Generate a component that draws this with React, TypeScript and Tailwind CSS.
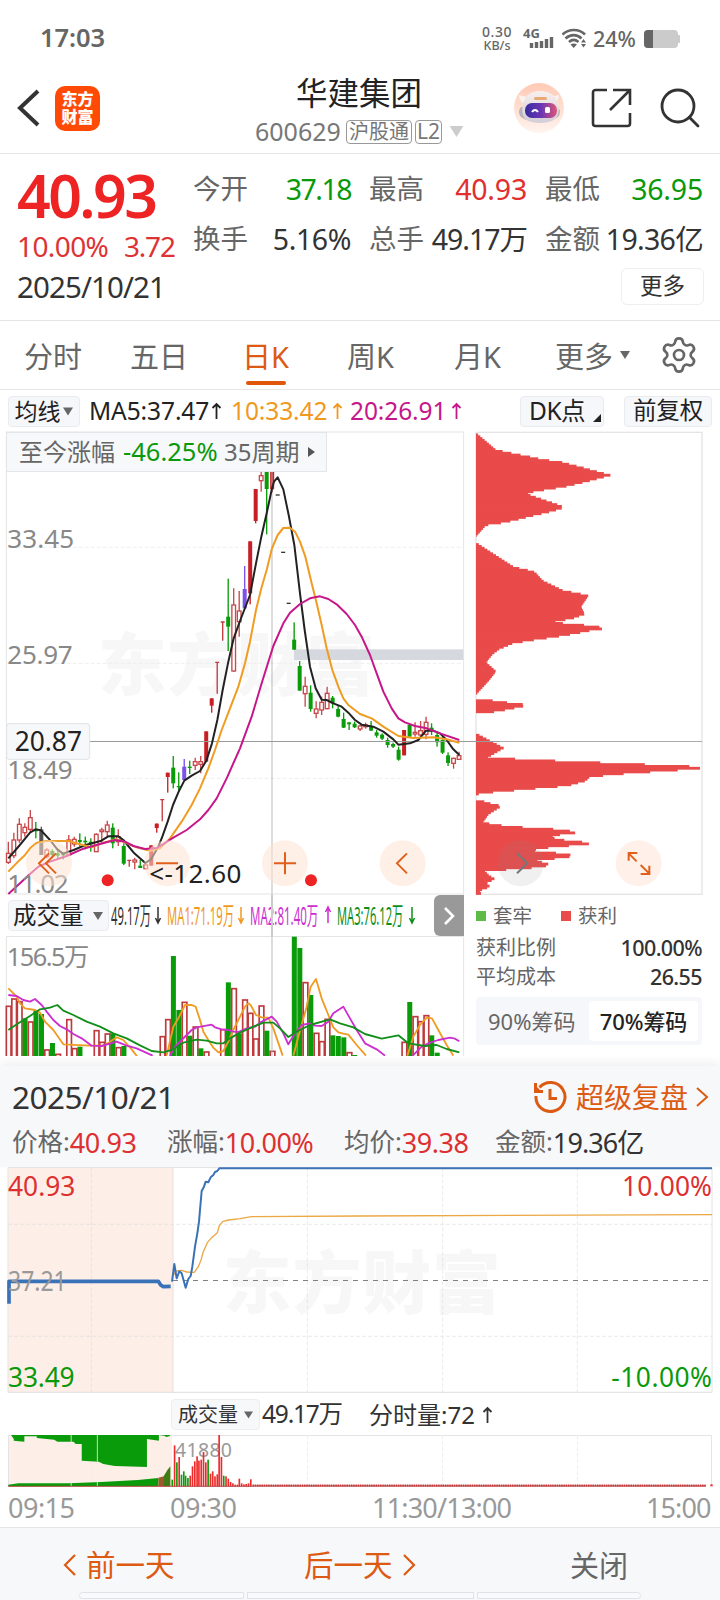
import { Search, Settings } from "lucide-react";
import clsx from "clsx";

type Candle = [kind: string, open: number, close: number, high: number, low: number];
type Point = [number, number];

// r = hollow red, R = solid red, g = green, k = grey, p = purple, t = limit up, d = dash
const candles: Candle[] = [
  ["r", 1390, 1417, 1355, 1422], ["r", 1350, 1397, 1328, 1405], ["r", 1303, 1350, 1285, 1358],
  ["r", 1312, 1328, 1300, 1340], ["r", 1283, 1318, 1260, 1325], ["g", 1318, 1324, 1296, 1345],
  ["k", 1318, 1395, 1310, 1395], ["r", 1380, 1400, 1375, 1405], ["g", 1383, 1395, 1378, 1405],
  ["g", 1390, 1397, 1380, 1405], ["g", 1392, 1396, 1388, 1408], ["r", 1350, 1395, 1335, 1398],
  ["r", 1348, 1362, 1340, 1370], ["g", 1350, 1356, 1330, 1370], ["g", 1352, 1357, 1340, 1378],
  ["g", 1355, 1363, 1345, 1385], ["r", 1333, 1385, 1330, 1386], ["r", 1320, 1325, 1313, 1360],
  ["r", 1305, 1325, 1292, 1340], ["g", 1313, 1360, 1300, 1375], ["r", 1340, 1355, 1318, 1368],
  ["g", 1368, 1421, 1360, 1425], ["t", 1410, 1410, 1408, 1430], ["r", 1410, 1416, 1403, 1438],
  ["g", 1427, 1434, 1410, 1434], ["r", 1425, 1436, 1420, 1438], ["R", 1366, 1427, 1366, 1427],
  ["R", 1301, 1314, 1300, 1328], ["t", 1228, 1228, 1228, 1294], ["R", 1148, 1161, 1148, 1208],
  ["g", 1133, 1180, 1098, 1195], ["g", 1188, 1192, 1147, 1205], ["p", 1130, 1170, 1107, 1172],
  ["g", 1130, 1134, 1112, 1152], ["r", 1115, 1126, 1103, 1140], ["r", 1115, 1123, 1098, 1150],
  ["R", 1024, 1115, 1024, 1115], ["R", 925, 947, 925, 968], ["t", 816, 816, 816, 911],
  ["t", 695, 695, 695, 752], ["g", 680, 710, 566, 783], ["r", 645, 843, 595, 845],
  ["r", 663, 695, 603, 740], ["p", 597, 655, 528, 657], ["R", 454, 610, 454, 643],
  ["R", 297, 393, 297, 400], ["r", 257, 272, 246, 305], ["g", 246, 297, 246, 433],
  ["R", 246, 298, 246, 307], ["d", 315, 315, 315, 315], ["d", 487, 487, 487, 487],
  ["d", 640, 640, 640, 640], ["g", 749, 779, 697, 779], ["g", 828, 902, 813, 902],
  ["r", 889, 911, 860, 950], ["g", 908, 957, 886, 965], ["r", 957, 970, 934, 985],
  ["r", 937, 960, 920, 975], ["r", 910, 956, 890, 958], ["g", 923, 940, 918, 955],
  ["g", 957, 980, 945, 982], ["g", 987, 1013, 968, 1014], ["g", 997, 1003, 997, 1020],
  ["g", 1001, 1012, 995, 1014], ["r", 1008, 1017, 1005, 1023], ["r", 1005, 1010, 998, 1016],
  ["g", 1008, 1022, 993, 1022], ["g", 1027, 1037, 1020, 1043], ["g", 1034, 1046, 1030, 1050],
  ["g", 1050, 1065, 1043, 1073], ["g", 1062, 1070, 1058, 1074], ["g", 1079, 1109, 1070, 1112],
  ["R", 1020, 1096, 1020, 1096], ["g", 1005, 1040, 1003, 1042], ["r", 1027, 1032, 997, 1040],
  ["r", 1022, 1035, 993, 1038], ["r", 997, 1033, 980, 1048], ["g", 1013, 1020, 1000, 1035],
  ["g", 1035, 1057, 1028, 1070], ["g", 1050, 1088, 1040, 1092], ["g", 1096, 1119, 1087, 1128],
  ["r", 1105, 1120, 1103, 1136], ["r", 1097, 1108, 1085, 1110],
];

const ma5 =
  "25,1405 57,1368 90,1328 106,1318 123,1321 150,1350 172,1378 189,1391 221,1380 254,1366 304,1352 325,1339 355,1339 370,1350 403,1390 436,1419 453,1408 475,1370 487,1340 503,1295 519,1245 536,1205 553,1172 575,1157 600,1143 619,1112 636,1060 652,990 668,900 685,815 701,745 720,693 750,615 768,520 784,440 800,370 816,295 822,275 833,262 850,298 866,375 883,465 900,610 914,720 930,830 947,895 965,929 980,930 1000,940 1025,950 1045,968 1065,990 1085,1004 1120,1010 1150,1025 1180,1048 1195,1064 1230,1060 1255,1050 1278,1022 1300,1022 1320,1030 1340,1050 1360,1078 1378,1095";
const ma10 =
  "25,1445 57,1412 75,1395 90,1375 110,1358 140,1353 205,1353 240,1363 275,1372 310,1358 350,1348 375,1357 410,1372 450,1382 480,1375 510,1345 545,1295 575,1245 600,1195 625,1135 645,1080 665,1020 690,955 715,890 735,820 750,755 768,660 784,595 800,540 816,475 833,435 850,414 870,413 885,425 900,455 916,500 935,580 950,640 965,705 980,775 997,840 1015,890 1030,925 1045,945 1080,972 1115,985 1150,1010 1195,1038 1240,1044 1300,1042 1340,1048 1378,1058";
const ma20 =
  "25,1512 60,1480 90,1452 115,1430 150,1415 200,1398 250,1376 300,1362 345,1350 375,1355 400,1368 435,1377 470,1374 490,1362 520,1343 560,1320 600,1288 625,1260 650,1225 680,1165 720,1075 755,980 785,880 820,768 850,700 870,668 900,642 930,625 960,619 985,627 1010,643 1040,672 1065,705 1085,740 1110,795 1130,850 1150,905 1175,955 1195,985 1215,997 1245,1008 1280,1015 1320,1030 1378,1050";

// chip distribution, [y, width]
const chips: Point[][] = [
  [[127, 0], [178, 60], [183, 85], [190, 118], [198, 160], [207, 200], [214, 255], [222, 285], [230, 318], [238, 345], [247, 380], [254, 405], [261, 375], [267, 353], [273, 330], [280, 300], [288, 265], [295, 220], [302, 175], [310, 152], [318, 175], [330, 210], [340, 240], [350, 265], [358, 240], [366, 210], [376, 165], [385, 130], [395, 85], [403, 30], [437, 0]],
  [[456, 0], [530, 115], [537, 150], [545, 178], [570, 200], [600, 262], [608, 305], [615, 337], [648, 315], [670, 326], [683, 290], [695, 225], [703, 320], [712, 395], [720, 340], [728, 300], [738, 240], [748, 170], [758, 110], [775, 70], [790, 50], [815, 30], [842, 60], [870, 38], [908, 3]],
  [[930, 50], [937, 105], [943, 158], [950, 125], [956, 95], [962, 62], [966, 30]],
  [[1028, 0], [1072, 83], [1100, 35], [1107, 150], [1113, 300], [1120, 470], [1127, 640], [1132, 678], [1138, 605], [1145, 500], [1152, 400], [1160, 340], [1170, 330], [1185, 275], [1192, 190], [1198, 120], [1205, 40], [1210, 5]],
  [[1233, 25], [1239, 45], [1246, 77], [1270, 38], [1296, 20], [1305, 80], [1310, 140], [1316, 240], [1322, 290], [1328, 300], [1333, 240], [1340, 225], [1347, 250], [1352, 300], [1358, 355], [1364, 290], [1372, 200], [1380, 160], [1387, 240], [1395, 303], [1402, 250], [1410, 175], [1418, 215], [1424, 220], [1430, 180], [1436, 100], [1440, 25], [1455, 40], [1465, 57], [1477, 30], [1488, 43], [1500, 10], [1508, 15]],
];

// volume bars, [index, color, top]
const volumes: [number, string, number][] = [
  [0, "r", 347], [1, "r", 325], [2, "r", 333], [3, "g", 385], [4, "r", 394], [5, "g", 360], [6, "g", 372],
  [7, "r", 478], [8, "g", 459], [9, "r", 491], [11, "r", 387], [12, "r", 474], [13, "g", 470],
  [16, "r", 420], [17, "r", 455], [18, "r", 430], [19, "g", 430], [20, "r", 471], [21, "g", 468],
  [28, "r", 438], [29, "r", 387], [30, "g", 198], [31, "g", 360], [32, "r", 335], [33, "g", 437],
  [34, "r", 409], [35, "g", 475], [36, "r", 484], [39, "r", 417], [40, "g", 277], [41, "r", 294],
  [42, "g", 430], [43, "r", 328], [44, "r", 368], [45, "r", 445], [46, "r", 346], [47, "g", 422],
  [48, "r", 482], [52, "g", 140], [53, "g", 174], [54, "r", 276], [55, "g", 315], [56, "r", 428],
  [57, "r", 453], [58, "r", 386], [59, "g", 436], [60, "g", 438], [61, "g", 442], [62, "r", 486],
  [63, "g", 495], [72, "r", 455], [73, "g", 336], [74, "r", 378], [75, "r", 393], [76, "r", 375],
  [77, "g", 436], [78, "g", 488],
];

const volMa1 = [
  "25,295 50,320 60,340 75,355 105,360 120,368 135,395 160,420 190,463 270,467 310,467 330,455 350,442 370,450 395,478 412,500",
  "500,497 520,410 535,385 555,345 575,345 587,350 600,390 610,425 625,450 640,473 655,487 670,483 685,455 700,420 720,380 735,350 745,340 752,345 768,375 785,382 805,383 820,415 848,497",
  "880,497 895,440 920,350 932,290 948,267 965,325 985,375 1000,412 1015,427 1030,431 1045,434 1070,465 1098,497",
  "1222,497 1240,440 1260,405 1280,383 1296,385 1315,420 1340,465 1360,497",
];
const volMa2 = [
  "25,315 50,318 70,330 90,335 105,327 125,345 140,365 160,390 180,408 200,418 220,432 245,445 275,467 305,468 350,455 380,467 410,475 458,497",
  "510,497 525,470 545,450 560,435 575,420 590,412 635,404 645,412 665,418 685,420 700,425 715,426 740,415 765,410 780,398 815,380 830,395 850,430 865,463 885,430 905,405 930,400 945,407 965,408 985,395 1000,370 1030,350 1050,385 1070,420 1095,460 1130,478 1155,497",
  "1238,497 1265,470 1290,458 1315,450 1350,443 1365,446 1378,454",
];
const volMa3 = [
  "25,420 55,400 90,378 120,358 150,353 172,345 190,362 220,375 260,395 300,410 340,430 380,445 420,466 455,483 490,487 520,478 550,458 590,449 620,452 650,460 670,460 690,445 720,428 760,410 790,398 820,398 840,415 865,441 890,425 930,405 990,388 1020,400 1060,412 1095,432 1145,446 1195,436 1225,460 1275,468 1310,465 1340,477 1378,487",
];

const minuteVolumes: [number, string, number][] = [
  [375, "g", 255], [380, "r", 152], [385, "g", 203], [390, "r", 187], [395, "g", 240], [400, "g", 230],
  [404, "g", 243], [409, "g", 250], [414, "r", 243], [419, "r", 215], [424, "r", 200], [429, "r", 185],
  [433, "r", 198], [438, "r", 195], [443, "r", 172], [448, "r", 203], [453, "g", 195], [458, "r", 237],
  [463, "r", 230], [468, "r", 245], [473, "r", 239], [477, "r", 121], [482, "r", 187], [487, "g", 243],
  [492, "r", 245], [497, "r", 252], [502, "r", 262], [507, "r", 266], [512, "r", 270], [517, "r", 270],
  [521, "r", 252], [526, "r", 266], [531, "r", 269], [536, "r", 268], [541, "r", 266], [546, "r", 254],
];

const quotes = [
  { label: "今开", value: "37.18", color: "text-[#0a990a] tracking-[-1.5px]" },
  { label: "最高", value: "40.93", color: "text-[#e03030] tracking-[-0.2px]" },
  { label: "最低", value: "36.95", color: "text-[#0a990a] tracking-[-0.2px]" },
  { label: "换手", value: "5.16%", color: "text-[#333333] tracking-[-0.4px]" },
  { label: "总手", value: "49.17万", color: "text-[#333333] tracking-[-1px]" },
  { label: "金额", value: "19.36亿", color: "text-[#333333] tracking-[-0.7px]" },
];

const candleX = (i: number) => 25 + 16.49 * i;

// fill in one bar for every price level between the known points
const chipRows = (points: Point[]) => {
  const rows: Point[] = [];
  for (let y = points[0][0]; y <= points[points.length - 1][0]; y += 5.5) {
    let k = 0;
    while (k < points.length - 2 && points[k + 1][0] < y) k++;
    const [y0, w0] = points[k];
    const [y1, w1] = points[k + 1];
    rows.push([y, w0 + ((w1 - w0) * (y - y0)) / (y1 - y0)]);
  }
  return rows;
};

const Caret = ({ className = "" }: { className?: string }) => (
  <svg viewBox="0 0 10 8" className={clsx("shrink-0", className)}>
    <path d="M0 0h10L5 8z" fill="currentColor" />
  </svg>
);

const StatusBar = () => (
  <div className="flex h-[76px] items-center pl-10 text-[#666666]">
    <span className="w-[439px] text-[25.5px] font-semibold leading-none tracking-[-0.1px]">17:03</span>
    <div className="flex w-[36px] flex-col items-center text-[14px] font-medium">
      <span className="leading-[14px] tracking-[0.6px]">0.30</span>
      <span className="text-[12.5px] leading-[13px]">KB/s</span>
    </div>
    <svg width="32" height="22" viewBox="0 0 32 22" className="ml-2 shrink-0">
      <text x="0" y="11" fontSize="13" fontWeight="700" textLength="17" fill="#666666">4G</text>
      <path d="M8.500 21v-5M13.500 21v-6M18.500 21v-7M23.500 21v-9M28.500 21v-11" stroke="#666666" strokeWidth="3.400" />
    </svg>
    <svg width="26" height="20" viewBox="0 0 26 20" className="ml-[6px] shrink-0" fill="none" stroke="#666666" strokeWidth="2.600">
      <path d="M1.500 6.500c6.500-6 16.500-6 22.500 0M4.500 10.500c5-4.500 11.500-4.500 16 0M8 14c3-2.600 6.500-2.600 9.500 0" />
      <path d="M9.500 16.500c2-1.500 4.500-1.500 6.500 0L12.700 20z" fill="#666666" stroke="none" />
      <path d="M22.500 11l2.500 3.500h-5zM22.500 19.500l2.500-3.500h-5z" fill="#666666" stroke="none" />
    </svg>
    <span className="ml-[6px] mt-[2px] w-[51px] text-[21.5px] font-medium leading-none">24%</span>
    <svg width="37" height="18" viewBox="0 0 37 18" className="mt-[2px] shrink-0">
      <rect width="34" height="18" rx="4" fill="#cbcbcb" />
      <path d="M34 5.500h1.500v7H34z" fill="#cbcbcb" stroke="#cbcbcb" />
      <path d="M9 0v18H4a4 4 0 0 1-4-4V4a4 4 0 0 1 4-4z" fill="#666666" />
    </svg>
  </div>
);

const Header = () => (
  <div className="flex h-[78px] items-center border-b border-[#e6e6e6] pb-[13px]">
    <svg width="24" height="40" viewBox="0 0 24 40" className="ml-4 shrink-0" fill="none">
      <path d="M22 3L4 20l18 17" stroke="#333333" strokeWidth="4" />
    </svg>
    <div className="ml-[15px] flex h-[45px] w-[45px] shrink-0 flex-col items-center justify-center rounded-[10px] bg-[#ff4a05] text-[16px] font-black leading-[18.500px] text-white">
      <span>东方</span>
      <span>财富</span>
    </div>
    <div className="ml-[155px] flex h-full w-[212px] flex-col items-start">
      <h1 className="ml-[41px] text-[31.5px] leading-[34px] text-[#222222]">华建集团</h1>
      <div className="mt-[9px] flex h-[26px] items-center text-[#777777]">
        <span className="w-[91px] text-[25px] leading-none">600629</span>
        <span className="flex h-[24px] w-[66px] shrink-0 items-center justify-center rounded border border-[#999999] text-[20px]">沪股通</span>
        <span className="ml-[3px] flex h-[24px] w-[27px] shrink-0 items-center justify-center rounded border border-[#999999] text-[21px]">L2</span>
        <Caret className="ml-[7px] h-[11px] w-[15px] text-[#cccccc]" />
      </div>
    </div>
    <svg width="50" height="50" viewBox="0 0 50 50" className="ml-[47px] shrink-0">
      <defs>
        <linearGradient id="halo" x1="0" y1="0" x2="0" y2="1">
          <stop offset="0" stopColor="#ffc9b3" />
          <stop offset="1" stopColor="#fff4ef" />
        </linearGradient>
        <linearGradient id="visor" x1="0" y1="0" x2="1" y2="0">
          <stop offset="0" stopColor="#3a2c9e" />
          <stop offset="0.500" stopColor="#6a35b5" />
          <stop offset="1" stopColor="#e05578" />
        </linearGradient>
        <linearGradient id="shell" x1="0" y1="0" x2="0" y2="1">
          <stop offset="0" stopColor="#f8f0ed" />
          <stop offset="1" stopColor="#d3cdd6" />
        </linearGradient>
      </defs>
      <circle cx="25" cy="25" r="25" fill="url(#halo)" />
      <path d="M5 12q6 1 10 3l-5 6q-5-3-5-9zM45 12q-6 1-10 3l5 6q5-3 5-9z" fill="#fbf1ee" />
      <path d="M7 24q-4 5 0 10l5 3V24zM44 24q4 5 0 10l-4 2V24z" fill="#b9b3bd" />
      <path d="M26 8c10 0 16 5 18 13s0 14-6 17q-12 4-24 0c-5-3-7-9-5-17S16 8 26 8z" fill="url(#shell)" />
      <rect x="20" y="14" width="13" height="3" rx="1.500" fill="#e9a974" />
      <rect x="11" y="20" width="32" height="15" rx="7" fill="url(#visor)" />
      <path d="M18 29q3-4 6 0" stroke="#fff" strokeWidth="2" fill="none" />
      <rect x="31" y="24" width="5" height="6" rx="1.500" fill="#fff" />
    </svg>
    <svg width="42" height="42" viewBox="0 0 42 42" className="ml-[26px] shrink-0" fill="none" stroke="#333333" strokeWidth="2.600">
      <path d="M17 3H5.500A2.500 2.500 0 0 0 3 5.500v31A2.500 2.500 0 0 0 5.500 39h32a2.500 2.500 0 0 0 2.500-2.500V26M23 3h17v15M39 4L20 23" />
    </svg>
    <Search className="ml-[24px] h-[48px] w-[48px] shrink-0 text-[#333333]" strokeWidth={1.4} />
  </div>
);

const QuotePanel = () => (
  <div className="h-[167px] border-b border-[#e6e6e6] pl-[17px] pr-[16px] pt-[18px]">
    <div className="flex h-[93px]">
      <div className="w-[176px] shrink-0">
        <div className="h-[57px] text-[59px] font-semibold leading-[47px] tracking-[-2.6px] text-[#ee2424]">40.93</div>
        <div className="flex h-[34px] items-center text-[28px] text-[#dd3333]">
          <span className="w-[107px] tracking-[-0.6px]">10.00%</span>
          <span className="tracking-[-1.2px]">3.72</span>
        </div>
      </div>
      <div className="grid grid-cols-3 gap-x-[18px]">
        {quotes.map(({ label, value, color }) => (
          <div key={label} className="flex h-[50px] w-[158px] items-start justify-between leading-[34px]">
            <span className="text-[27.5px] text-[#666666]">{label}</span>
            <span className={clsx("whitespace-nowrap text-[28.5px]", color)}>{value}</span>
          </div>
        ))}
      </div>
    </div>
    <div className="mt-[3px] flex h-[37px] items-center justify-between">
      <span className="text-[29.5px] leading-none tracking-[-0.9px] text-[#333333]">2025/10/21</span>
      <button className="h-[37px] w-[83px] rounded-md border border-[#eeeeee] text-[22.5px] leading-none text-[#333333]">
        更多
      </button>
    </div>
  </div>
);

const Tabs = () => (
  <div className="flex h-[69px] items-center border-b border-[#e6e6e6] pl-6 text-[29px] text-[#666666]">
    <span className="mt-[3px] w-[106px]">分时</span>
    <span className="mt-[3px] w-[112px]">五日</span>
    <div className="relative mt-[3px] w-[105px] text-[#dd5a12]">
      日K
      <div className="absolute left-[4px] top-[46px] h-[4px] w-[40px] rounded-full bg-[#e0560b]" />
    </div>
    <span className="mt-[3px] w-[107px]">周K</span>
    <span className="mt-[3px] w-[101px]">月K</span>
    <span className="mt-[3px]">更多</span>
    <Caret className="ml-[7px] h-[8px] w-[10px]" />
    <Settings className="ml-[29px] h-[40px] w-[40px]" strokeWidth={1.6} />
  </div>
);

const Arrow = ({ up, className = "" }: { up?: boolean; className?: string }) => (
  <span className={clsx("shrink-0", className)}>
    <svg width="11" height="18" viewBox="0 0 11 18" fill="none" stroke="currentColor" strokeWidth="1.800">
      <path d={up ? "M5.500 17V2M1.500 6L5.500 2l4 4" : "M5.500 1v15M1.500 12l4 4 4-4"} />
    </svg>
  </span>
);

const MaBar = () => (
  <div className="flex h-[41px] items-center pl-2 pt-px text-[24.5px] leading-none tracking-[-0.1px] text-[#222222]">
    <button className="flex h-[31px] w-[72px] shrink-0 items-center justify-center gap-[3px] rounded border border-[#e9ebef] bg-[#f6f7fa] text-[23px]">
      均线
      <Caret className="h-[9px] w-[10px] text-[#666666]" />
    </button>
    <span className="ml-[9px] w-[122px]">MA5:37.47</span>
    <Arrow up className="w-[20px]" />
    <span className="w-[101px] text-[#f0991f]">10:33.42</span>
    <Arrow up className="w-[18px] text-[#f0991f]" />
    <span className="w-[101px] text-[#c6178a]">20:26.91</span>
    <Arrow up className="w-[69px] text-[#c6178a]" />
    <button className="flex h-[31px] w-[84px] shrink-0 items-center rounded border border-[#e9ebef] bg-[#f6f7fa] pl-[8px] tracking-[-0.5px]">
      DK点
      <svg width="8" height="8" className="ml-[8px] mt-[14px]">
        <path d="M8 0v8H0z" fill="#222222" />
      </svg>
    </button>
    <button className="ml-5 flex h-[31px] w-[88px] shrink-0 items-center justify-center rounded border border-[#e9ebef] bg-[#f6f7fa] text-[23.5px]">
      前复权
    </button>
  </div>
);

const CandleShape = ({ candle, index }: { candle: Candle; index: number }) => {
  const [kind, top, bottom, high, low] = candle;
  const x = candleX(index);
  if (kind === "d") return <path d={`M${x - 6} ${top}h12`} stroke="#333333" strokeWidth="4" />;
  if (kind === "t")
    return <path d={`M${x - 6} ${top + 1}h12M${x} ${top}V${low}`} stroke="#c4393c" strokeWidth="4" />;
  if (kind === "r")
    return (
      <g stroke="#c9484a" strokeWidth="4" fill="#ffffff">
        <path d={`M${x} ${high}V${low}`} />
        <rect x={x - 5.5} y={top} width="11" height={Math.max(bottom - top, 3)} />
      </g>
    );
  const fill = kind === "g" ? "#0a9b0a" : kind === "p" ? "#7a52e8" : kind === "k" ? "#555555" : "#c81e26";
  return (
    <g fill={fill}>
      <rect x={x - 2} y={high} width="4" height={low - high} />
      <rect x={x - 6} y={top} width="12" height={bottom - top} />
    </g>
  );
};

const KChart = () => (
  <div className="relative h-[464px]">
    <svg width="465" height="464" viewBox="0 123 1395 1392" className="block overflow-visible">
      <rect x="19" y="126" width="1372" height="1386" fill="#ffffff" stroke="#e4e4e4" strokeWidth="3" />
      <text x="294" y="901" fontSize="206" fontWeight="900" textLength="830" fill="#f7f7f7">东方财富</text>
      <path d="M20 472H1390M20 820H1390M20 1165H1390" stroke="#eeeeee" strokeWidth="3" strokeDasharray="12 6" />
      <rect x="882" y="778" width="508" height="32" fill="#d5d8de" />
      {candles.map((candle, i) => (
        <CandleShape key={i} candle={candle} index={i} />
      ))}
      <path d="M816 126V1515" stroke="#b5b5b5" strokeOpacity="0.700" strokeWidth="4" />
      <path d="M270 1054.500H1500" stroke="#9a9a9a" strokeWidth="3" />
      <g fill="none" strokeWidth="6" strokeLinejoin="round">
        <polyline points={ma5} stroke="#222222" />
        <polyline points={ma10} stroke="#f09c22" />
        <polyline points={ma20} stroke="#c6178a" />
      </g>
      <g fill="#888888" fontSize="78">
        <text x="22" y="475" textLength="200">33.45</text>
        <text x="22" y="822" textLength="196">25.97</text>
        <text x="22" y="1168" textLength="196">18.49</text>
        <text x="22" y="1509" textLength="184">11.02</text>
      </g>
      <rect x="20" y="1001" width="249" height="107" rx="8" fill="#f7f8fa" stroke="#dfe2e6" strokeWidth="3" />
      <text x="44" y="1084" fontSize="79" textLength="202" fill="#222222">20.87</text>
      <g fill="#ffe3d4" fillOpacity="0.550">
        <circle cx="147" cy="1420" r="69" />
        <circle cx="502" cy="1420" r="69" />
        <circle cx="855" cy="1420" r="69" />
        <circle cx="1208" cy="1420" r="69" />
      </g>
      <g fill="none" stroke="#e0601c" strokeWidth="6">
        <path d="M147 1390l-30 30 30 30M168 1390l-30 30 30 30M468 1420h66M822 1420h66M855 1387v66M1221 1390l-30 30 30 30" />
      </g>
      <circle cx="323" cy="1471" r="18" fill="#ee2424" />
      <circle cx="933" cy="1471" r="18" fill="#ee2424" />
      <text x="448" y="1478" fontSize="78" textLength="276" fill="#222222">&lt;-12.60</text>
    </svg>
    <div className="absolute left-[6px] top-px flex h-[40px] w-[321px] items-center border border-[#e4e5e8] bg-[#f7f8fa] pl-3 text-[24px] leading-none text-[#666666]">
      <span className="w-[104px]">至今涨幅</span>
      <span className="w-[101px] text-[25.5px] text-[#0a990a]">-46.25%</span>
      <span className="w-[84px] whitespace-nowrap">35周期</span>
      <svg width="7" height="10">
        <path d="M0 0l7 5-7 5z" fill="#555555" />
      </svg>
    </div>
  </div>
);

const VolumeBar = () => (
  <div className="relative flex h-[41px] items-center pl-2 text-[24px] leading-none">
    <button className="flex h-[31px] w-[101px] shrink-0 items-center rounded border border-[#e9ebef] bg-[#f6f7fa] pl-1 text-[23.5px] text-[#222222]">
      成交量
      <Caret className="ml-[9px] h-[8px] w-[10px] text-[#666666]" />
    </button>
    <svg width="312" height="36" viewBox="0 -3 312 36" className="ml-[2px] shrink-0" fontSize="24.500" strokeWidth="1.500">
      <g fill="#333333" stroke="#333333">
        <text transform="translate(0 24) scale(0.46 1)" stroke="none">49.17万</text>
        <path d="M47 6v15M44.500 17l2.500 5 2.500-5" fill="none" />
      </g>
      <g fill="#f0991f" stroke="#f0991f">
        <text transform="translate(56 24) scale(0.46 1)" stroke="none">MA1:71.19万</text>
        <path d="M130 6v15M127.500 17l2.500 5 2.500-5" fill="none" />
      </g>
      <g fill="#cc2fd0" stroke="#cc2fd0">
        <text transform="translate(139 24) scale(0.47 1)" stroke="none">MA2:81.40万</text>
        <path d="M217 22V7M214.500 11l2.500-5 2.500 5" fill="none" />
      </g>
      <g fill="#0c8f18" stroke="#0c8f18">
        <text transform="translate(226 24) scale(0.455 1)" stroke="none">MA3:76.12万</text>
        <path d="M301 6v15M298.500 17l2.500 5 2.500-5" fill="none" />
      </g>
    </svg>
    <div className="absolute left-[271px] top-0 h-[41px] w-[1.5px] bg-[#cccccc]" />
    <div className="absolute left-[434px] top-0 flex h-[41px] w-[30px] items-center justify-center rounded-l-md bg-[#999999]">
      <svg width="12" height="18" fill="none" stroke="#ffffff" strokeWidth="2.600">
        <path d="M2 1l8 8-8 8" />
      </svg>
    </div>
  </div>
);

const VolumeChart = () => (
  <svg width="465" height="120" viewBox="0 138 1395 360" className="block">
    <path d="M19 500V139.500H1391V500" fill="none" stroke="#e4e4e4" strokeWidth="3" />
    {volumes.map(([i, color, top]) =>
      color === "g" ? (
        <rect key={i} x={candleX(i) - 7} y={top} width="15" height={498 - top} fill="#0a9b0a" />
      ) : (
        <rect key={i} x={candleX(i) - 6} y={top + 2} width="14" height={520 - top} fill="#ffffff" stroke="#bf3a3c" strokeWidth="5" />
      )
    )}
    <path d="M816 138V497" stroke="#b5b5b5" strokeOpacity="0.700" strokeWidth="4" />
    <g fill="none" strokeWidth="5.500" strokeLinejoin="round">
      {volMa1.map((points) => <polyline key={points} points={points} stroke="#f09c22" />)}
      {volMa2.map((points) => <polyline key={points} points={points} stroke="#cc2fd0" />)}
      {volMa3.map((points) => <polyline key={points} points={points} stroke="#128f1a" />)}
    </g>
    <text x="20" y="228" fontSize="76" textLength="248" fill="#888888">156.5万</text>
  </svg>
);

const ChipPanel = () => (
  <div className="w-[255px]">
    <svg width="255" height="464" viewBox="0 123 765 1392" className="block">
      <rect x="33" y="127" width="678" height="1386" fill="none" stroke="#e4e4e4" strokeWidth="4" />
      {chips.map((points) =>
        chipRows(points).map(([y, width]) => (
          <rect key={y} x="33" y={y - 2} width={width} height="8.500" fill="#e94a4a" />
        ))
      )}
      <path d="M0 1054.500H711" stroke="#777777" strokeOpacity="0.600" strokeWidth="3" />
      <circle cx="167" cy="1420" r="69" fill="#808080" fillOpacity="0.120" />
      <path d="M156 1390l31 30-31 30" fill="none" stroke="#777777" strokeWidth="6" />
      <circle cx="521" cy="1420" r="69" fill="#fff1e9" />
      <path d="M491 1412v-23h26M491 1390l24 24M553 1427v25h-26M553 1451l-26-26" fill="none" stroke="#e0601c" strokeWidth="6" />
    </svg>
    <div className="flex h-[38px] items-center pl-[11px] pt-[3px] text-[19.5px] leading-none text-[#666666]">
      <span className="h-[10px] w-[10px] bg-[#5dbb46]" />
      <span className="ml-[7px] w-[68px]">套牢</span>
      <span className="h-[10px] w-[10px] bg-[#e94a4a]" />
      <span className="ml-[7px]">获利</span>
    </div>
    <div className="ml-[11px] w-[226px] text-[20px] text-[#666666]">
      <div className="flex h-[29px] items-center justify-between leading-none">
        <span>获利比例</span>
        <span className="text-[21.5px] font-medium tracking-[-0.6px] text-[#333333]">100.00%</span>
      </div>
      <div className="flex h-[30px] items-center justify-between leading-none">
        <span>平均成本</span>
        <span className="text-[21.5px] font-medium tracking-[-0.6px] text-[#333333]">26.55</span>
      </div>
      <div className="mt-[5px] flex h-[48px] items-center rounded bg-[#f6f7fa] text-[22px] leading-none">
        <span className="w-[113px] pl-3">90%筹码</span>
        <span className="flex h-[40px] w-[109px] items-center justify-center rounded bg-white font-medium tracking-[-0.1px] text-[#222222]">70%筹码</span>
      </div>
    </div>
  </div>
);

const Stat = ({ label, value, color, className = "" }: { label: string; value: string; color: string; className?: string }) => (
  <div className={clsx("flex items-center whitespace-nowrap leading-none", className)}>
    <span className="text-[25.5px] text-[#666666]">{label}:</span>
    <span className={clsx("text-[27px] tracking-[-0.5px]", color)}>{value}</span>
  </div>
);

const ReplayHeader = () => (
  <div className="h-[101px] bg-[#f7f8fa] shadow-[0_-4px_8px_rgba(0,0,0,0.06)]">
    <div className="flex h-[62px] items-center pl-[12px]">
      <span className="w-[521px] text-[31.5px] tracking-[-0.5px] text-[#333333]">2025/10/21</span>
      <svg width="34" height="34" viewBox="0 0 34 34" className="shrink-0" fill="none" stroke="#dd5a12" strokeWidth="3">
        <path d="M3 16A14.500 14.500 0 1 0 6.500 7.500M2.500 3v8.500H10M17 9v9.500h7" />
        <path d="M2 5v7h7z" fill="#dd5a12" stroke="none" />
      </svg>
      <span className="ml-[9px] w-[119px] whitespace-nowrap text-[28px] text-[#dd5a12]">超级复盘</span>
      <svg width="14" height="20" viewBox="0 0 14 20" fill="none" stroke="#dd5a12" strokeWidth="2">
        <path d="M2 1l10 9-10 9" />
      </svg>
    </div>
    <div className="flex h-[28px] items-center pl-[12px]">
      <Stat label="价格" value="40.93" color="text-[#dd3030]" className="w-[155px]" />
      <Stat label="涨幅" value="10.00%" color="text-[#dd3030]" className="w-[177px]" />
      <Stat label="均价" value="39.38" color="text-[#dd3030]" className="w-[151px]" />
      <Stat label="金额" value="19.36亿" color="text-[#333333] tracking-[-0.9px]" />
    </div>
  </div>
);

const MinuteChart = () => (
  <svg width="720" height="226" viewBox="0 321 2160 678" className="block">
    <rect x="24" y="322" width="495" height="676" fill="#fdeee8" />
    <path d="M24 998V322.500H2136V998" fill="none" stroke="#e4e4e4" strokeWidth="3" />
    <path d="M24 997H2136" stroke="#e4e4e4" strokeWidth="4" />
    <path d="M519 322V997" stroke="#ecdfda" strokeWidth="3" />
    <text x="668" y="745" fontSize="206" fontWeight="900" textLength="834" fill="#f7f7f7">东方财富</text>
    <path d="M24 493H2136M24 829H2136M274 322V997M922 322V997M1328 322V997M1732 322V997" stroke="#dddddd" strokeOpacity="0.600" strokeWidth="3" strokeDasharray="12 6" />
    <path d="M519 661.500H2136" stroke="#808080" strokeWidth="3" strokeDasharray="15 15" />
    <g fill="none" strokeLinejoin="round">
      <polyline
        points="520,645 530,633 545,631 560,636 583,637 595,620 603,600 610,575 622,548 635,533 652,518 658,497 668,485 685,480 720,476 755,470 1080,468 2136,464"
        stroke="#eba844"
        strokeWidth="4"
      />
      <polyline points="27,731 27,664 475,664 482,675 490,680 512,679" stroke="#3a72b8" strokeWidth="11" />
      <polyline
        points="516,665 523,612 530,655 538,634 545,640 552,665 557,683 565,657 572,648 577,620 585,560 592,520 597,485 600,450 605,393 612,380 617,365 625,367 632,352 640,345 645,336 652,333 658,325 2136,325"
        stroke="#3a72b8"
        strokeWidth="6"
      />
    </g>
    <g fontSize="79">
      <text x="24" y="408" textLength="202" fill="#dd3030">40.93</text>
      <text x="24" y="693" textLength="176" lengthAdjust="spacingAndGlyphs" fill="#999999">37.21</text>
      <text x="24" y="981" textLength="200" fill="#0a990a">33.49</text>
      <text x="1866" y="408" textLength="270" fill="#dd3030">10.00%</text>
      <text x="1834" y="981" textLength="302" fill="#0a990a">-10.00%</text>
    </g>
  </svg>
);

const MinuteVolume = () => (
  <div className="h-[134px]">
    <div className="flex h-[42px] items-center pl-[171px] pt-px text-[24.5px] leading-none text-[#333333]">
      <button className="flex h-[31px] w-[89px] shrink-0 items-center rounded border border-[#eceef2] bg-[#f7f8fa] pl-[6px] text-[20px] leading-none">
        成交量
        <Caret className="ml-[6px] h-[8px] w-[9px] text-[#666666]" />
      </button>
      <span className="ml-[2px] w-[107px] tracking-[-1.2px]">49.17万</span>
      <span className="w-[113px] whitespace-nowrap text-[24px]">分时量:72</span>
      <Arrow up />
    </div>
    <svg width="720" height="53" viewBox="0 0 720 53" className="block">
      <rect x="8" y="0" width="164" height="51" fill="#fdeee8" />
      <path d="M8.500 51V0.500H711.500V51" fill="none" stroke="#e4e4e4" />
      <path d="M91.500 0V51M307.500 0V51M442.500 0V51M577.500 0V51" stroke="#eeeeee" strokeDasharray="4 2" />
      <text x="175" y="22" fontSize="19.500" textLength="57" fill="#999999">41880</text>
      <g transform="scale(0.4592 0.3333) translate(0 -121)">
        <path d="M24 121L30 133V138L53 141V125H80V130L118 135L125 141H160L165 148H178V198L215 201L225 208L250 214L320 217V133L346 138V121z" fill="#0a9b0a" />
        <path d="M346 121H370V124L362 127L358 123z" fill="#0a9b0a" />
        <path d="M18 275V270L40 266H150L220 262L300 256L345 250V275z" fill="#0a9b0a" />
        <path d="M345 275V249L357 245L360 275z" fill="#9c5a2e" />
        <path d="M357 275V243L365 225L371 215V275z" fill="#3f7d14" />
        <path d="M155 121V148M155 262V275M212 121V201M212 260V275" stroke="#fdeee8" strokeWidth="2" />
        {minuteVolumes.map(([x, color, top]) => (
          <rect key={x} x={x - 1.6} y={top} width="3.600" height={275 - top} fill={color === "g" ? "#0a9b0a" : "#ee2a2a"} />
        ))}
        <path d="M550 272.500H1537" stroke="#d03c3c" strokeWidth="6" strokeDasharray="3.300 1.570" />
        <path d="M550 274H1537M18 275H550" stroke="#b03030" strokeOpacity="0.700" strokeWidth="4" />
        <rect x="1547" y="269" width="5" height="6" fill="#ee2a2a" />
      </g>
    </svg>
    <div className="flex h-[39px] items-center pl-[8px] text-[27px] leading-none tracking-[-0.5px] text-[#999999]">
      <span className="w-[162px]">09:15</span>
      <span className="w-[202px]">09:30</span>
      <span className="w-[274px] tracking-[-0.8px]">11:30/13:00</span>
      <span className="tracking-[-0.9px]">15:00</span>
    </div>
  </div>
);

const BottomBar = () => (
  <div className="h-[73px] border-t border-[#e3e4e6] bg-[#f7f8fa] text-[29.5px] leading-none">
    <div className="flex h-[64px] items-center pt-[10px] text-[#dd5a12]">
      <svg width="14" height="22" viewBox="0 0 14 22" className="ml-[63px]" fill="none" stroke="currentColor" strokeWidth="2.200">
        <path d="M12 1L2 11l10 10" />
      </svg>
      <span className="ml-[9px] w-[218px]">前一天</span>
      <span className="w-[98px]">后一天</span>
      <svg width="14" height="22" viewBox="0 0 14 22" fill="none" stroke="currentColor" strokeWidth="2.200">
        <path d="M2 1l10 10L2 21" />
      </svg>
      <span className="ml-[154px] text-[29px] text-[#666666]">关闭</span>
    </div>
    <div className="flex gap-[3px] pl-[79px]">
      <div className="h-[7px] w-[165px] rounded-l-md border border-[#e0e2e5] bg-[#f9fafb]" />
      <div className="h-[7px] w-[227px] border border-[#e0e2e5] bg-[#f9fafb]" />
      <div className="h-[7px] w-[164px] rounded-r-md border border-[#e0e2e5] bg-[#f9fafb]" />
    </div>
  </div>
);

const App = () => {
  return (
    <div className="h-[1600px] w-[720px] overflow-hidden bg-white font-['Noto_Sans','Noto_Sans_CJK_SC',sans-serif]">
      <StatusBar />
      <Header />
      <QuotePanel />
      <Tabs />
      <MaBar />
      {/* K line and chip distribution */}
      <div className="flex h-[635px]">
        <div className="w-[465px] shrink-0">
          <KChart />
          <VolumeBar />
          <VolumeChart />
        </div>
        <ChipPanel />
      </div>
      {/* Replay of the selected day */}
      <ReplayHeader />
      <MinuteChart />
      <MinuteVolume />
      <BottomBar />
    </div>
  );
};

export default App;
